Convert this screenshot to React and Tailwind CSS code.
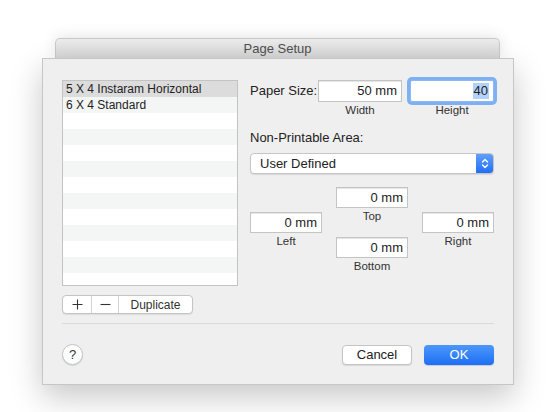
import React from 'react'

const font = { fontFamily: '"Liberation Sans", Arial, sans-serif' }

const presets = ['5 X 4 Instaram Horizontal', '6 X 4 Standard']

function MarginBox({ value, label, w = 'w-[72px]' }) {
  return (
    <div className="flex flex-col items-center">
      <div
        className={`${w} h-[21px] bg-white border border-[#c4c4c4] shadow-[inset_0_1px_0_#e6e6e6] flex items-center justify-end pr-[4px] text-[13px] text-[#222]`}
      >
        {value}
      </div>
      <div className="mt-[2px] text-[11.5px] leading-[13px] text-[#333]">{label}</div>
    </div>
  )
}

export default function App() {
  const rows = Array.from({ length: 13 })

  return (
    <div className="w-[556px] h-[412px] bg-white overflow-hidden pt-[38px]" style={font}>
      {/* window behind the sheet */}
      <div className="ml-[55px] w-[445px] h-[20px] rounded-t-[5px] border border-b-0 border-[#c9c9c9] bg-gradient-to-b from-[#ececec] to-[#d6d6d6] shadow-[0_-2px_14px_rgba(0,0,0,0.1)] flex items-center justify-center text-[13px] text-[#4d4d4d]">
        Page Setup
      </div>

      {/* sheet */}
      <div className="ml-[42px] w-[472px] h-[327px] border border-[#c6c6c6] bg-[#efefef] shadow-[0_12px_30px_rgba(0,0,0,0.22)] pl-[19px] pr-[19px] pt-[21px] flex flex-col">
        <div className="flex gap-[12px]">
          {/* presets list */}
          <div className="w-[176px] flex flex-col">
            <div className="h-[206px] border border-[#c3c3c3] overflow-hidden bg-white">
              {rows.map((_, i) => (
                <div
                  key={i}
                  className={`h-[16px] pl-[3px] text-[12px] leading-[16px] text-[#222] ${
                    i === 0 ? 'bg-[#dcdcdc]' : i % 2 === 1 ? 'bg-[#f4f5f5]' : 'bg-white'
                  }`}
                >
                  {presets[i] || ''}
                </div>
              ))}
            </div>
            <div className="mt-[9px] w-[131px] h-[19px] flex bg-white border border-[#c4c4c4] rounded-[4px] shadow-[0_1px_1px_rgba(0,0,0,0.08)] text-[12px] text-[#333]">
              <div className="w-[29px] flex items-center justify-center border-r border-[#d4d4d4]">
                <svg width="11" height="11" viewBox="0 0 11 11" stroke="#333" strokeWidth="1.1">
                  <path d="M5.5 0.5v10M0.5 5.5h10" />
                </svg>
              </div>
              <div className="w-[27px] flex items-center justify-center border-r border-[#d4d4d4]">
                <svg width="11" height="11" viewBox="0 0 11 11" stroke="#333" strokeWidth="1.1">
                  <path d="M0.5 5.5h10" />
                </svg>
              </div>
              <div className="flex-1 flex items-center justify-center">Duplicate</div>
            </div>
          </div>

          {/* settings */}
          <div className="w-[244px] flex flex-col">
            <div className="flex items-start">
              <div className="w-[68px] h-[22px] flex items-center text-[13px] text-[#222]">Paper Size:</div>
              <div className="flex flex-col items-center">
                <div className="w-[84px] h-[22px] bg-white border border-[#c4c4c4] shadow-[inset_0_1px_0_#e6e6e6] flex items-center justify-end pr-[4px] text-[13px] text-[#222]">
                  50 mm
                </div>
                <div className="mt-[2px] text-[11.5px] leading-[13px] text-[#333]">Width</div>
              </div>
              <div className="ml-[8px] flex flex-col items-center">
                <div className="w-[84px] h-[22px] bg-white border border-[#8fb8f0] rounded-[2px] shadow-[0_0_0_3px_#7eb0f4] flex items-center justify-end pr-[4px] text-[13px] text-[#222]">
                  <span className="bg-[#b3d2fb] px-[1px] leading-[16px]">40</span>
                </div>
                <div className="mt-[2px] text-[11.5px] leading-[13px] text-[#333]">Height</div>
              </div>
            </div>

            <div className="mt-[13px] text-[13px] leading-[16px] text-[#222]">Non-Printable Area:</div>

            <div className="mt-[7px] h-[21px] flex bg-white border border-[#c6c6c6] rounded-[4px] shadow-[0_1px_1px_rgba(0,0,0,0.1)] overflow-hidden">
              <div className="flex-1 flex items-center pl-[9px] text-[13px] text-[#222]">User Defined</div>
              <div className="w-[17px] bg-gradient-to-b from-[#5fa0fb] to-[#1f6ef5] flex items-center justify-center">
                <svg width="8" height="13" viewBox="0 0 8 13" fill="none" stroke="white" strokeWidth="1.4" strokeLinecap="round" strokeLinejoin="round">
                  <path d="M1.5 5L4 2.5L6.5 5M1.5 8L4 10.5L6.5 8" />
                </svg>
              </div>
            </div>

            {/* margins */}
            <div className="mt-[13px] flex items-center gap-[14px]">
              <MarginBox value="0 mm" label="Left" />
              <div className="flex flex-col items-center">
                <MarginBox value="0 mm" label="Top" />
                <div className="mt-[14px]">
                  <MarginBox value="0 mm" label="Bottom" />
                </div>
              </div>
              <MarginBox value="0 mm" label="Right" />
            </div>
          </div>
        </div>

        <div className="mt-[9px] h-px bg-[#dadada]" />

        <div className="mt-[20px] flex items-center">
          <div className="w-[21px] h-[21px] rounded-full bg-white border border-[#c2c2c2] shadow-[0_1px_1px_rgba(0,0,0,0.1)] flex items-center justify-center text-[13px] text-[#333]">
            ?
          </div>
          <div className="flex-1" />
          <div className="w-[70px] h-[20px] bg-white border border-[#c4c4c4] rounded-[4px] shadow-[0_1px_1px_rgba(0,0,0,0.1)] flex items-center justify-center text-[13px] text-[#222]">
            Cancel
          </div>
          <div className="ml-[12px] w-[70px] h-[20px] rounded-[4px] bg-gradient-to-b from-[#4d97fb] to-[#1c6ff5] shadow-[0_1px_1px_rgba(0,0,0,0.15)] flex items-center justify-center text-[13px] text-white">
            OK
          </div>
        </div>
      </div>
    </div>
  )
}
